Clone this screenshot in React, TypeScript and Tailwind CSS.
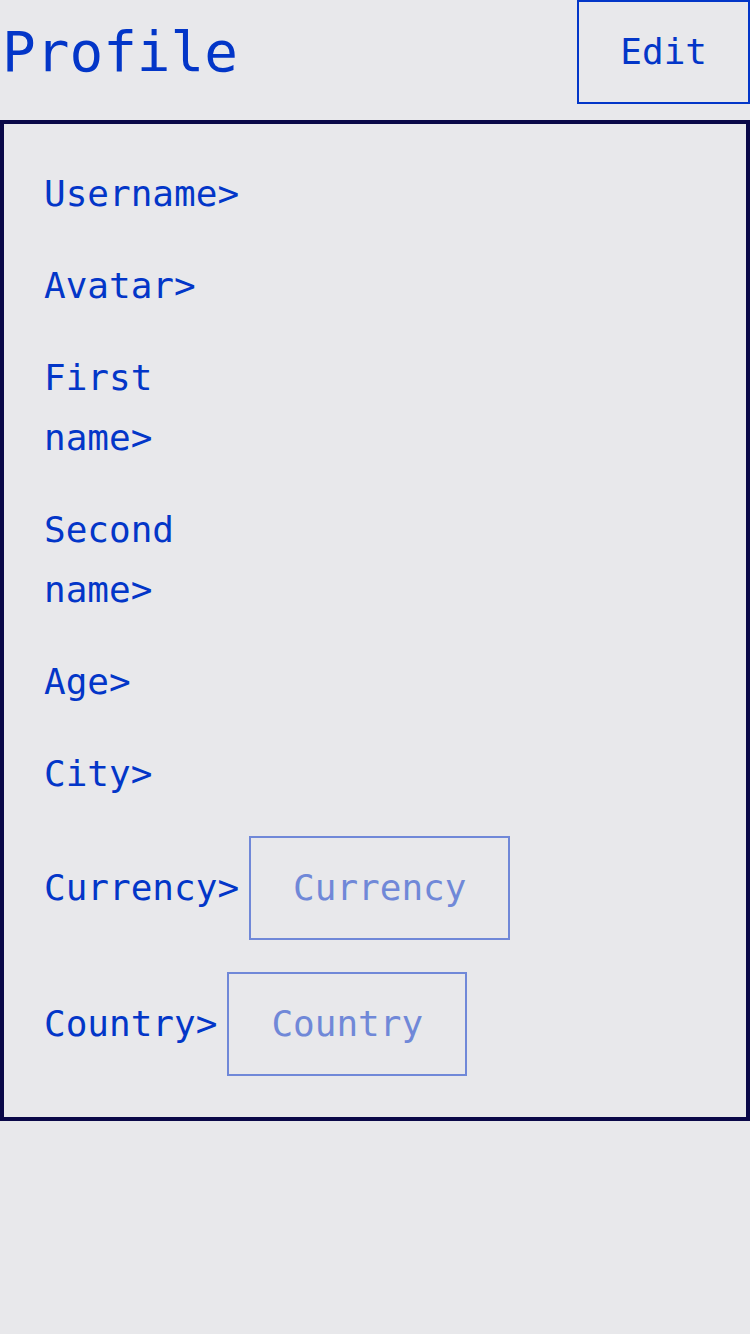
const fieldClass =
  'border-2 border-[#7088d8] px-[42px] py-[20px] text-[36px] leading-[60px] text-[#7088d8] bg-transparent outline-none';

const labelClass = 'max-w-[205px] text-[36px] leading-[60px] text-[#0336c8]';

type Row = { label: string; field?: string };

const rows: Row[] = [
  { label: 'Username>' },
  { label: 'Avatar>' },
  { label: 'First name>' },
  { label: 'Second name>' },
  { label: 'Age>' },
  { label: 'City>' },
  { label: 'Currency>', field: 'Currency' },
  { label: 'Country>', field: 'Country' },
];

export default function App() {
  return (
    <div
      className="min-h-[1334px] w-[750px] bg-[#e8e8eb]"
      style={{ fontFamily: '"DejaVu Sans Mono", "Liberation Mono", monospace' }}
    >
      <header className="mb-4 flex h-[104px] items-center justify-between">
        <h1 className="ml-[2px] text-[56px] leading-none text-[#0336c8]">Profile</h1>
        <button
          type="button"
          className="h-[104px] border-2 border-[#0336c8] px-[41px] text-[36px] leading-none text-[#0336c8]"
        >
          Edit
        </button>
      </header>

      <section className="flex flex-col gap-8 border-4 border-[#0a0848] pb-[41px] pl-[40px] pr-6 pt-[40px]">
        {rows.map((row) => (
          <div key={row.label} className="flex items-center gap-[10px]">
            <span className={labelClass}>{row.label}</span>
            {row.field && <span className={fieldClass}>{row.field}</span>}
          </div>
        ))}
      </section>
    </div>
  );
}
